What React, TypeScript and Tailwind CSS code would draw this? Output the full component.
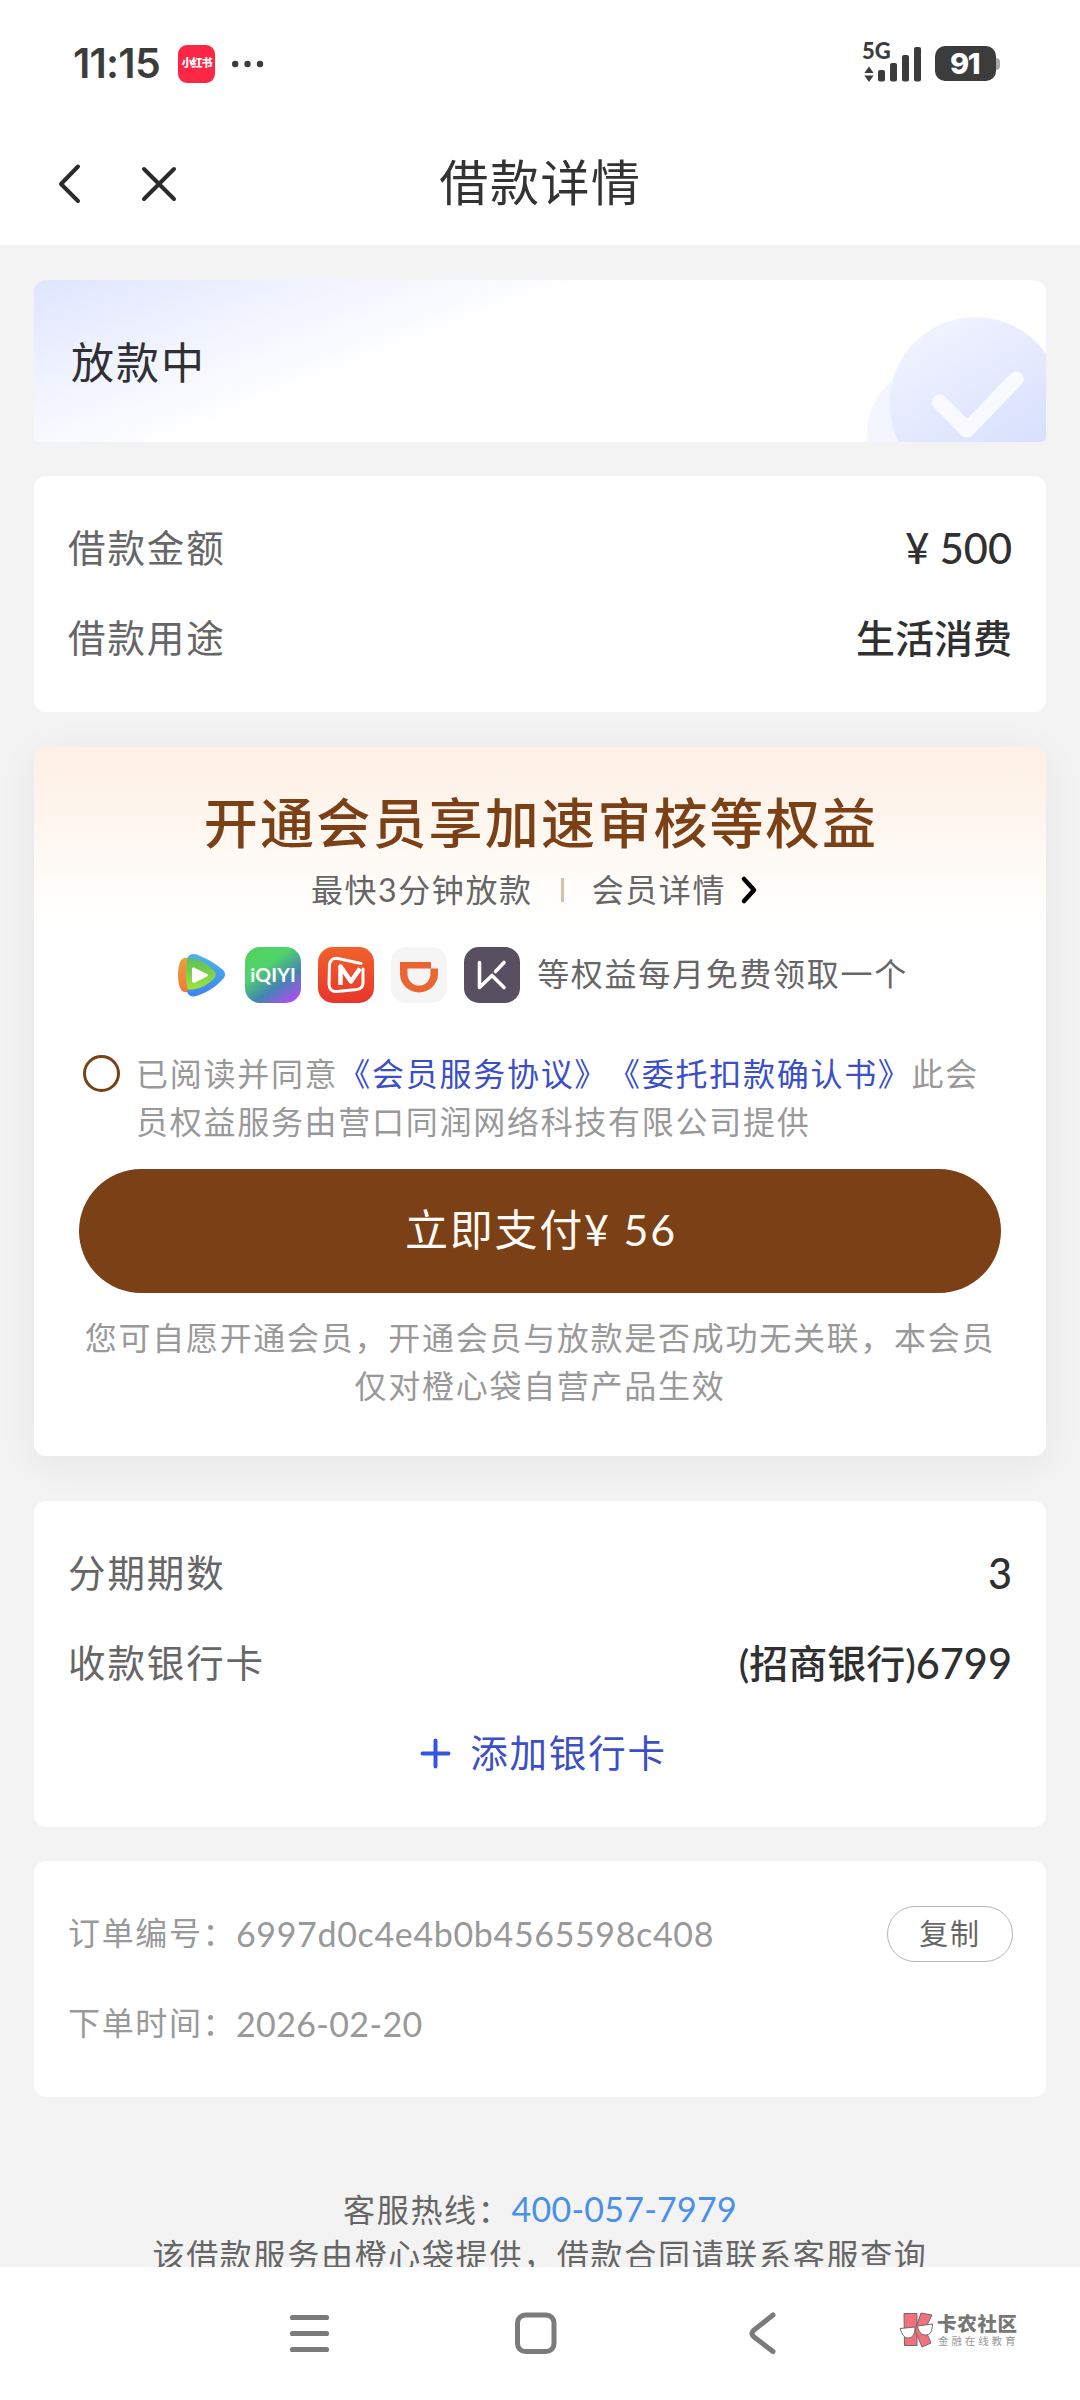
import React from 'react';

const loanRows = [
  { label: '借款金额', value: '', digits: '¥ 500' },
  { label: '借款用途', value: '生活消费', digits: '' },
];

const repayRows = [
  { label: '分期期数', value: '', digits: '3' },
  { label: '收款银行卡', value: '(招商银行)', digits: '6799' },
];

const StatusBar: React.FC = () => (
  <div className="h-[120px] flex items-start justify-between pl-[73px] pr-[80px] pt-[42px]">
    <div className="flex items-center h-[43px]">
      <span className="w-[90px] font-['Inter'] font-semibold text-[41px] leading-[43px] tracking-[-0.8px] text-[#3c3c3c]">11:15</span>
      <span className="ml-[15px] h-[38px] w-[37px] rounded-[9px] bg-[#fb2744] flex items-center justify-center text-white text-[11px] tracking-[-1.2px] font-black">
        小红书
      </span>
      <svg className="ml-[17px]" width="32" height="8" viewBox="0 0 32 8" fill="#3c3c3c">
        <circle cx="3.2" cy="4" r="3.2" />
        <circle cx="15.5" cy="4" r="3.2" />
        <circle cx="28" cy="4" r="3.2" />
      </svg>
    </div>
    <div className="flex items-start">
      <svg className="overflow-visible" width="60" height="42" viewBox="0 0 60 42" fill="#3c3c3c">
        <text x="0" y="16.500" fontFamily="Lato, sans-serif" fontWeight="900" fontSize="22">5G</text>
        <path d="M7 24.5l4.6 6.5H2.4zM7 40l4.6-6.5H2.4z" />
        <rect x="16" y="28" width="7" height="11.5" rx="2" />
        <rect x="28" y="21" width="7" height="18.5" rx="2" />
        <rect x="40" y="13" width="7" height="26.5" rx="2" />
        <rect x="52" y="5" width="7" height="34.5" rx="2" />
      </svg>
      <div className="ml-[13px] mt-[4px] flex items-center">
        <span className="h-[35px] w-[61px] rounded-[10px] bg-[#3c3c3c] text-white flex items-center justify-center pr-[2px] font-['Inter'] font-extrabold text-[29px] leading-none tracking-[-1.5px]">
          91
        </span>
        <span className="h-[12px] w-[4px] rounded-r-[4px] bg-[#a8a8a8]"></span>
      </div>
    </div>
  </div>
);

const NavBar: React.FC = () => (
  <div className="h-[125px] flex items-start pt-[32px]">
    <div className="w-[300px] h-[64px] flex items-center pl-[57px]">
      <svg width="25" height="42" viewBox="0 0 25 42" fill="none" stroke="#2b2b2b" strokeWidth="4" strokeLinecap="round" strokeLinejoin="round">
        <path d="M21 3.5L4 21l17 17" />
      </svg>
      <svg className="ml-[58px]" width="38" height="38" viewBox="0 0 38 38" fill="none" stroke="#2b2b2b" strokeWidth="4" strokeLinecap="round">
        <path d="M4 4l30 30M34 4L4 34" />
      </svg>
    </div>
    <h1 className="flex-1 text-center text-[49px] leading-[60px] tracking-[1.6px] pl-[1px] text-[#333]">借款详情</h1>
    <div className="w-[300px]"></div>
  </div>
);

const StatusCard: React.FC = () => (
  <div className="h-[162px] rounded-t-[12px] rounded-b-[5px] overflow-hidden flex items-center justify-between bg-[linear-gradient(159deg,#dfe5ff_0px,#f1f4ff_110px,#ffffff_200px)]">
    <span className="pl-[37px] pt-[4px] text-[43px] tracking-[2px] text-[#303033]">放款中</span>
    <svg width="182" height="162" viewBox="0 0 182 162" fill="none">
      <defs>
        <linearGradient id="disc" x1="0.2" y1="0.05" x2="0.65" y2="0.8">
          <stop offset="0" stopColor="#f1f3ff" />
          <stop offset="1" stopColor="#d9e1fd" />
        </linearGradient>
      </defs>
      <circle cx="70" cy="153" r="67" fill="#f4f6ff" />
      <circle cx="111.500" cy="123" r="86" fill="url(#disc)" />
      <path d="M75.500 122L103 150l49-51" stroke="#f8faff" strokeWidth="15.500" strokeLinecap="round" strokeLinejoin="round" />
    </svg>
  </div>
);

interface InfoRowProps {
  label: string;
  value: string;
  digits: string;
}

const InfoRow: React.FC<InfoRowProps> = ({ label, value, digits }) => (
  <div className="h-[90px] flex items-center justify-between">
    <span className="text-[37.500px] tracking-[1.900px] text-[#666]">{label}</span>
    <div className="flex items-center font-medium text-[#303030]">
      {value && <span className="text-[39px]">{value}</span>}
      {digits && <span className="text-[41.500px]">{digits}</span>}
    </div>
  </div>
);

const TencentVideoIcon = () => (
  <svg width="56" height="56" viewBox="0 0 56 56">
    <defs>
      <linearGradient id="tvBlue" x1="0" y1="0" x2="0" y2="1">
        <stop offset="0" stopColor="#4fb4e6" />
        <stop offset="1" stopColor="#3d84f0" />
      </linearGradient>
      <linearGradient id="tvGreen" x1="0" y1="0" x2="0" y2="1">
        <stop offset="0" stopColor="#5cc05a" />
        <stop offset="1" stopColor="#a0e23c" />
      </linearGradient>
      <linearGradient id="tvOrange" x1="0" y1="0" x2="0" y2="1">
        <stop offset="0" stopColor="#e8a23c" />
        <stop offset="1" stopColor="#f2783c" />
      </linearGradient>
    </defs>
    <path d="M12 11c4-1 7 1 7 4v26c0 3-4 5-7 4-4-1-6-8-6-17s2-16 6-17z" fill="url(#tvOrange)" />
    <path d="M15.500 10.500c1.500-3.500 6-4.500 10.500-2.500 9 3.500 17.500 8.500 24.500 14.500 3.500 3.500 3.500 6.500 0 10C44 39.500 36 45 26 48.500c-4.500 2-9 1-10.500-2.500z" fill="url(#tvBlue)" />
    <path d="M15.500 11.500c9-1 19 4.500 26 11.500 3 3 3 6 0 9-7 7-17 11.500-26 10.500-2-9-2-22 0-31z" fill="url(#tvGreen)" />
    <path d="M20 22.500c0-2 1.500-2.500 3-1.500l12 6c1.500 1 1.500 1.500 0 2.500l-12 6c-1.500 1-3 .500-3-1.500z" fill="#fff" />
  </svg>
);

const IqiyiIcon = () => (
  <div className="h-[56px] w-[56px] rounded-[15px] flex items-center justify-center bg-[linear-gradient(145deg,#55d05c_0%,#4fd46a_35%,#4583b4_65%,#b04df0_92%)] text-white font-['Lato'] font-bold text-[19.500px] leading-none tracking-[0.200px]">
    iQIYI
  </div>
);

const MangoIcon = () => (
  <svg width="56" height="56" viewBox="0 0 56 56" fill="none" stroke="#fff" strokeLinejoin="round">
    <defs>
      <linearGradient id="mango" x1="0" y1="0" x2="0" y2="1">
        <stop offset="0" stopColor="#f0622a" />
        <stop offset="1" stopColor="#e8352c" />
      </linearGradient>
    </defs>
    <rect width="56" height="56" rx="15" fill="url(#mango)" stroke="none" />
    <path d="M43 16.500L20 11.500c-5-1-8 2-8.500 6L11 37c0 5 3 8 8 7.500l20-2c4-.500 6-3 6-7V22" strokeWidth="3" strokeLinecap="round" />
    <path d="M22.500 38V19.500l10.500 15 9-13" strokeWidth="4.500" />
  </svg>
);

const DidiIcon = () => (
  <svg width="56" height="56" viewBox="0 0 56 56">
    <rect width="56" height="56" rx="15" fill="#f5f5f6" />
    <path fillRule="evenodd" d="M9 15h31v6.500h7V27a19 18.500 0 0 1-38 0zm7.500 6.500V27a11.500 11.500 0 0 0 23 0v-5.500z" fill="#ea6532" />
  </svg>
);

const KeepIcon = () => (
  <svg width="56" height="56" viewBox="0 0 56 56" fill="none" stroke="#fff" strokeWidth="3.600" strokeLinecap="round" strokeLinejoin="round">
    <rect width="56" height="56" rx="15" fill="#584f60" stroke="none" />
    <path d="M15.500 15.500v25l12.500-12M31.500 24.500l8.500-9M28 28.500l12 12" />
  </svg>
);

const MemberCard: React.FC = () => (
  <section className="mt-[35px] h-[709px] rounded-[12px] px-[45px] pt-[45px] flex flex-col items-center bg-[linear-gradient(180deg,#fef0e5_0px,#fef7f0_85px,#fffdfa_140px,#ffffff_185px)] shadow-[0_8px_40px_rgba(0,20,20,0.06)]">
    <h2 className="text-[54px] leading-[64px] tracking-[2.200px] pl-[2px] font-medium text-[#7b4015]">开通会员享加速审核等权益</h2>
    <div className="mt-[14px] mr-[11px] h-[40px] flex items-center text-[32px] tracking-[1.600px] text-[#666]">
      <span>最快3分钟放款</span>
      <span className="mx-[28px] h-[24px] w-[3px] bg-[#d3bfac]"></span>
      <span>会员详情</span>
      <svg className="ml-[14px]" width="18" height="30" viewBox="0 0 18 30" fill="none" stroke="#000" strokeWidth="4.500" strokeLinecap="round" strokeLinejoin="round">
        <path d="M4 4l10 11L4 26" />
      </svg>
    </div>
    <div className="mt-[37px] h-[56px] flex items-center gap-[17px]">
      <TencentVideoIcon />
      <IqiyiIcon />
      <MangoIcon />
      <DidiIcon />
      <KeepIcon />
      <span className="pb-[2px] text-[32px] tracking-[1.700px] text-[#666]">等权益每月免费领取一个</span>
    </div>
    <div className="mt-[47px] w-full flex items-start">
      <span className="ml-[4px] mt-[5px] h-[37px] w-[37px] shrink-0 rounded-full border-[3px] border-[#7b4015]"></span>
      <p className="ml-[16px] text-[32px] leading-[48px] tracking-[1.720px] text-[#999]">
        已阅读并同意<span className="text-[#3a4fc8]">《会员服务协议》《委托扣款确认书》</span>此会员权益服务由营口同润网络科技有限公司提供
      </p>
    </div>
    <button className="mt-[23px] h-[124px] w-full shrink-0 rounded-full bg-[#7b4015] text-[43px] tracking-[1.800px] text-[#fffaf5] pb-[2px] pl-[2px]">
      立即支付¥ 56
    </button>
    <p className="mt-[21px] w-full text-center text-[32px] leading-[48px] tracking-[1.720px] text-[#999]">
      您可自愿开通会员，开通会员与放款是否成功无关联，本会员仅对橙心袋自营产品生效
    </p>
  </section>
);

const OrderCard: React.FC = () => (
  <section className="mt-[34px] h-[236px] rounded-[12px] bg-white pl-[34px] pr-[33px] pt-[27px] text-[32px] text-[#999]">
    <div className="h-[90px] flex items-center">
      <span className="w-[168px] tracking-[1.650px] whitespace-nowrap">订单编号：</span>
      <span className="text-[34px] tracking-[0.650px]">6997d0c4e4b0b4565598c408</span>
      <button className="ml-auto mt-[2px] h-[56px] w-[126px] rounded-full border border-[#b5b5b5] text-[29px] tracking-[1.800px] leading-none text-[#666] pb-[2px]">复制</button>
    </div>
    <div className="h-[90px] flex items-center">
      <span className="w-[168px] tracking-[1.650px] whitespace-nowrap">下单时间：</span>
      <span className="text-[34px] tracking-[0.350px]">2026-02-20</span>
    </div>
  </section>
);

const Watermark: React.FC = () => (
  <div className="flex items-center">
    <svg width="35" height="36" viewBox="0 0 35 36" stroke="#6f6a6a" strokeWidth="1">
      <path d="M5 1.500h13v32H5.500z" fill="#f2707c" />
      <path d="M22 1l11 2-7 14 6 14-9 4-7-17z" fill="#f2707c" />
      <path d="M1 16.500l15-1.500c0 7-2 11-7 11-4 0-6-4-8-9.500zM18.500 14l15-2c0 7-2 11-7 11-4 0-7-3-8-9z" fill="#fff" />
    </svg>
    <div className="ml-[3px] flex flex-col">
      <span className="text-[19.500px] leading-[21px] font-black tracking-[0.700px] text-[#777]">卡农社区</span>
      <span className="ml-[1px] mt-[1px] text-[10.500px] leading-[13px] tracking-[2.900px] text-[#999]">金融在线教育</span>
    </div>
  </div>
);

const SystemNav: React.FC = () => (
  <div className="h-[133px] bg-white flex items-start pt-[43px] pl-[288px]">
    <svg className="mt-[2px]" width="43" height="43" viewBox="0 0 43 43" stroke="#7b7b7b" strokeWidth="5.200" strokeLinecap="round">
      <path d="M4.500 5.500h34M4.500 21.500h34M4.500 37.500h34" />
    </svg>
    <svg className="ml-[182px] mt-[1px]" width="45" height="45" viewBox="0 0 45 45" fill="none" stroke="#7b7b7b" strokeWidth="5">
      <rect x="4.500" y="4" width="36.500" height="36.500" rx="8" />
    </svg>
    <svg className="ml-[189px] mt-[1px]" width="32" height="45" viewBox="0 0 32 45" fill="none" stroke="#7b7b7b" strokeWidth="5" strokeLinecap="round" strokeLinejoin="round">
      <path d="M26 4L6.500 19.500q-3 3 0 6L26 40.500" />
    </svg>
    <div className="ml-[120px] mt-[2px]">
      <Watermark />
    </div>
  </div>
);

const App: React.FC = () => {
  return (
    <div className="w-[1080px] h-[2400px] overflow-hidden flex flex-col bg-white font-['Lato','Noto_Sans_CJK_SC',sans-serif] [text-spacing-trim:space-all]">
      <StatusBar />
      <NavBar />
      <main className="h-[2022px] overflow-hidden bg-[#f3f3f3] px-[34px] pt-[35px]">
        <StatusCard />
        <section className="mt-[34px] h-[236px] rounded-[12px] bg-white px-[34px] pt-[27px]">
          {loanRows.map((row) => (
            <InfoRow key={row.label} {...row} />
          ))}
        </section>
        <MemberCard />
        <section className="mt-[45px] relative h-[326px] rounded-[12px] bg-white px-[34px] pt-[27px]">
          {repayRows.map((row) => (
            <InfoRow key={row.label} {...row} />
          ))}
          <button className="h-[90px] w-full pl-[7px] flex items-center justify-center text-[37.500px] tracking-[1.800px] text-[#3a4fc8]">
            <svg className="mr-[19px]" width="31" height="31" viewBox="0 0 31 31" stroke="#3355e0" strokeWidth="4" strokeLinecap="round">
              <path d="M2.500 15.500h26M15.500 2.500v26" />
            </svg>
            添加银行卡
          </button>
        </section>
        <OrderCard />
        <div className="mt-[89px] text-center text-[32px] leading-[45px] tracking-[1.700px] text-[#666] whitespace-nowrap">
          <p>
            客服热线：<a className="text-[34px] tracking-[0.250px] text-[#4a90e8]">400-057-7979</a>
          </p>
          <p>该借款服务由橙心袋提供，借款合同请联系客服查询</p>
        </div>
      </main>
      <SystemNav />
    </div>
  );
};

export default App;
